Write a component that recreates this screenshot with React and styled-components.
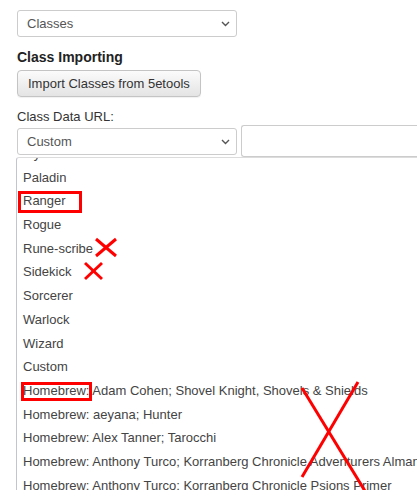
import React from 'react'
import styled, { createGlobalStyle } from 'styled-components'

const Global = createGlobalStyle`
  html, body {
    margin: 0;
    padding: 0;
    background: #fff;
    overflow: hidden;
  }
  body {
    font-family: "Liberation Sans", Arial, sans-serif;
    font-size: 13px;
    color: #333;
  }
`

const Page = styled.div`
  position: relative;
  padding: 10px 0 0 17px;
  height: 490px;
  box-sizing: border-box;
`

const Select = styled.div`
  box-sizing: border-box;
  width: 220px;
  height: 27px;
  margin-top: ${p => p.$offset || 0}px;
  display: flex;
  align-items: center;
  justify-content: space-between;
  padding: 0 6px 0 9px;
  border: 1px solid #ccc;
  border-radius: 3px;
  background: #fff;
  color: #555;
  flex: none;
`

const Heading = styled.div`
  font-weight: bold;
  font-size: 14px;
  line-height: 20px;
  margin: 10px 0 3px;
  color: #222;
`

const Button = styled.button`
  box-sizing: border-box;
  height: 27px;
  padding: 0 10px;
  font-family: inherit;
  font-size: 13px;
  color: #333;
  border: 1px solid #c4c4c4;
  border-radius: 4px;
  background: linear-gradient(to bottom, #fbfbfb 0%, #e4e4e4 100%);
  box-shadow: 0 1px 1px rgba(0, 0, 0, 0.06);
`

const Label = styled.div`
  margin-top: 12px;
  line-height: 16px;
  color: #333;
`

const Row = styled.div`
  display: flex;
  align-items: flex-start;
  gap: 4px;
`

const Input = styled.div`
  box-sizing: border-box;
  flex: 1;
  height: 32px;
  border: 1px solid #ccc;
  border-right: none;
  border-radius: 3px 0 0 3px;
`

const List = styled.div`
  margin-left: -1px;
  width: 480px;
  height: 340px;
  overflow: hidden;
  border-left: 1px solid #c4c4cc;
  border-top: 1px solid #dcdcdc;
  border-top-left-radius: 3px;
  background: #fff;
`

const Scroll = styled.div`
  margin-top: -16px;
`

const Item = styled.div`
  height: 23.7px;
  line-height: 23.7px;
  padding-left: 6px;
  white-space: nowrap;
  color: #444;
`

const Marks = styled.svg`
  position: absolute;
  left: 0;
  top: 0;
  pointer-events: none;
`

const Chevron = () => (
  <svg width="9" height="6" viewBox="0 0 9 6">
    <polyline points="1,1 4.5,4.5 8,1" fill="none" stroke="#555" strokeWidth="1.4" />
  </svg>
)

const options = [
  'Mystic', 'Paladin', 'Ranger', 'Rogue', 'Rune-scribe', 'Sidekick', 'Sorcerer',
  'Warlock', 'Wizard', 'Custom',
  'Homebrew: Adam Cohen; Shovel Knight, Shovels & Shields',
  'Homebrew: aeyana; Hunter',
  'Homebrew: Alex Tanner; Tarocchi',
  'Homebrew: Anthony Turco; Korranberg Chronicle Adventurers Almanac',
  'Homebrew: Anthony Turco; Korranberg Chronicle Psions Primer',
]

export default function App() {
  return (
    <>
      <Global />
      <Page>
        <Select>Classes<Chevron /></Select>
        <Heading>Class Importing</Heading>
        <Button>Import Classes from 5etools</Button>
        <Label>Class Data URL:</Label>
        <Row>
          <Select $offset={3}>Custom<Chevron /></Select>
          <Input />
        </Row>
        <List>
          <Scroll>
            {options.map(o => <Item key={o}>{o}</Item>)}
          </Scroll>
        </List>
        <Marks width="417" height="490" viewBox="0 0 417 490">
          <g fill="none" stroke="#ff0000" strokeWidth="3">
            <rect x="19.5" y="192.5" width="61" height="19" />
            <rect x="22.5" y="383.5" width="68" height="16" />
            <line x1="96" y1="239" x2="116" y2="256" />
            <line x1="116" y1="239" x2="96" y2="256" />
            <line x1="85" y1="263" x2="102" y2="279" />
            <line x1="102" y1="263" x2="85" y2="279" />
            <line x1="302" y1="388" x2="365" y2="491" />
            <line x1="358" y1="382" x2="302" y2="477" />
          </g>
        </Marks>
      </Page>
    </>
  )
}
